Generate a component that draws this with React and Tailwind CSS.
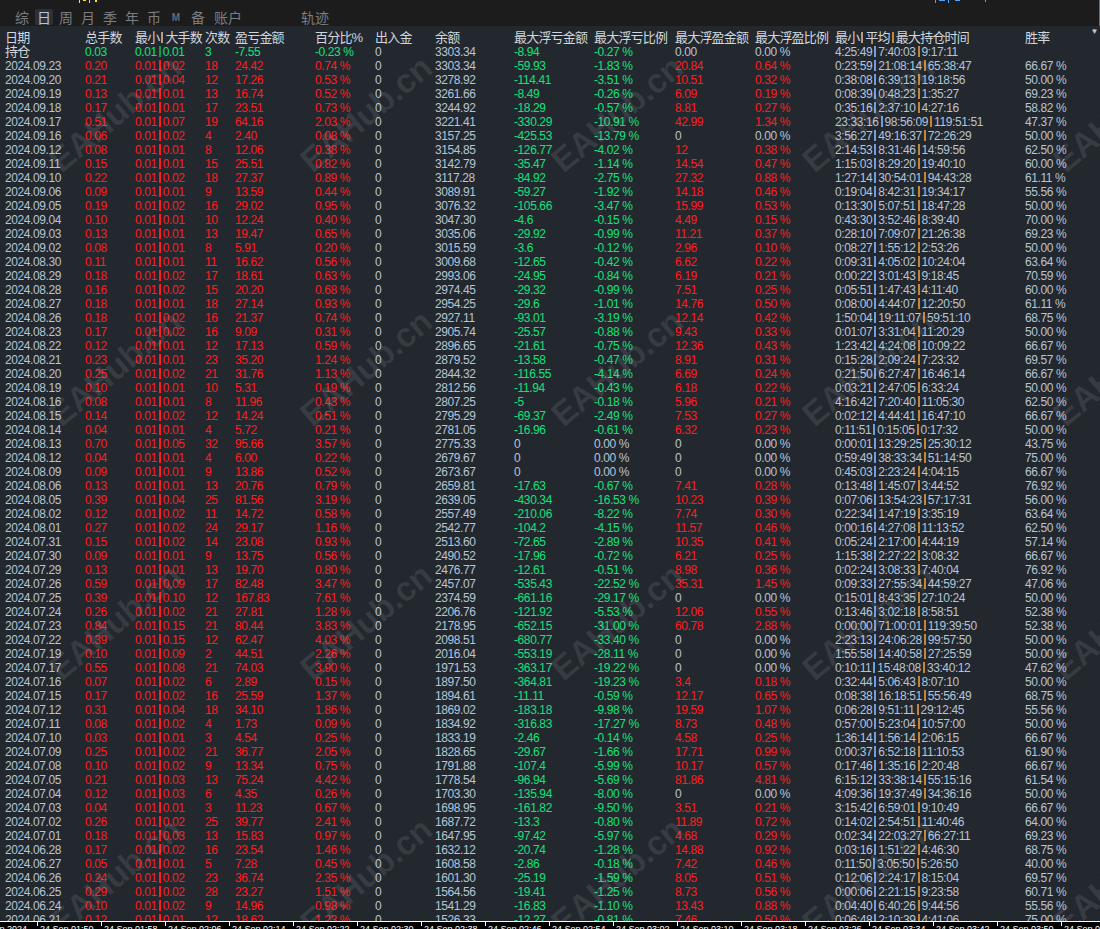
import React from 'react';

// date tot min max cnt pnl pct io bal flAmt flPct fpAmt fpPct t1 t2 t3 win
const RAW = `2024.09.23 0.20 0.01 0.02 18 24.42 0.74 0 3303.34 -59.93 -1.83 20.84 0.64 0:23:59 21:08:14 65:38:47 66.67
2024.09.20 0.21 0.01 0.04 12 17.26 0.53 0 3278.92 -114.41 -3.51 10.51 0.32 0:38:08 6:39:13 19:18:56 50.00
2024.09.19 0.13 0.01 0.01 13 16.74 0.52 0 3261.66 -8.49 -0.26 6.09 0.19 0:08:39 0:48:23 1:35:27 69.23
2024.09.18 0.17 0.01 0.01 17 23.51 0.73 0 3244.92 -18.29 -0.57 8.81 0.27 0:35:16 2:37:10 4:27:16 58.82
2024.09.17 0.51 0.01 0.07 19 64.16 2.03 0 3221.41 -330.29 -10.91 42.99 1.34 23:33:16 98:56:09 119:51:51 47.37
2024.09.16 0.06 0.01 0.02 4 2.40 0.08 0 3157.25 -425.53 -13.79 0 0.00 3:56:27 49:16:37 72:26:29 50.00
2024.09.12 0.08 0.01 0.01 8 12.06 0.38 0 3154.85 -126.77 -4.02 12 0.38 2:14:53 8:31:46 14:59:56 62.50
2024.09.11 0.15 0.01 0.01 15 25.51 0.82 0 3142.79 -35.47 -1.14 14.54 0.47 1:15:03 8:29:20 19:40:10 60.00
2024.09.10 0.22 0.01 0.02 18 27.37 0.89 0 3117.28 -84.92 -2.75 27.32 0.88 1:27:14 30:54:01 94:43:28 61.11
2024.09.06 0.09 0.01 0.01 9 13.59 0.44 0 3089.91 -59.27 -1.92 14.18 0.46 0:19:04 8:42:31 19:34:17 55.56
2024.09.05 0.19 0.01 0.02 16 29.02 0.95 0 3076.32 -105.66 -3.47 15.99 0.53 0:13:30 5:07:51 18:47:28 50.00
2024.09.04 0.10 0.01 0.01 10 12.24 0.40 0 3047.30 -4.6 -0.15 4.49 0.15 0:43:30 3:52:46 8:39:40 70.00
2024.09.03 0.13 0.01 0.01 13 19.47 0.65 0 3035.06 -29.92 -0.99 11.21 0.37 0:28:10 7:09:07 21:26:38 69.23
2024.09.02 0.08 0.01 0.01 8 5.91 0.20 0 3015.59 -3.6 -0.12 2.96 0.10 0:08:27 1:55:12 2:53:26 50.00
2024.08.30 0.11 0.01 0.01 11 16.62 0.56 0 3009.68 -12.65 -0.42 6.62 0.22 0:09:31 4:05:02 10:24:04 63.64
2024.08.29 0.18 0.01 0.02 17 18.61 0.63 0 2993.06 -24.95 -0.84 6.19 0.21 0:00:22 3:01:43 9:18:45 70.59
2024.08.28 0.16 0.01 0.02 15 20.20 0.68 0 2974.45 -29.32 -0.99 7.51 0.25 0:05:51 1:47:43 4:11:40 60.00
2024.08.27 0.18 0.01 0.01 18 27.14 0.93 0 2954.25 -29.6 -1.01 14.76 0.50 0:08:00 4:44:07 12:20:50 61.11
2024.08.26 0.18 0.01 0.02 16 21.37 0.74 0 2927.11 -93.01 -3.19 12.14 0.42 1:50:04 19:11:07 59:51:10 68.75
2024.08.23 0.17 0.01 0.02 16 9.09 0.31 0 2905.74 -25.57 -0.88 9.43 0.33 0:01:07 3:31:04 11:20:29 50.00
2024.08.22 0.12 0.01 0.01 12 17.13 0.59 0 2896.65 -21.61 -0.75 12.36 0.43 1:23:42 4:24:08 10:09:22 66.67
2024.08.21 0.23 0.01 0.01 23 35.20 1.24 0 2879.52 -13.58 -0.47 8.91 0.31 0:15:28 2:09:24 7:23:32 69.57
2024.08.20 0.25 0.01 0.02 21 31.76 1.13 0 2844.32 -116.55 -4.14 6.69 0.24 0:21:50 6:27:47 16:46:14 66.67
2024.08.19 0.10 0.01 0.01 10 5.31 0.19 0 2812.56 -11.94 -0.43 6.18 0.22 0:03:21 2:47:05 6:33:24 50.00
2024.08.16 0.08 0.01 0.01 8 11.96 0.43 0 2807.25 -5 -0.18 5.96 0.21 4:16:42 7:20:40 11:05:30 62.50
2024.08.15 0.14 0.01 0.02 12 14.24 0.51 0 2795.29 -69.37 -2.49 7.53 0.27 0:02:12 4:44:41 16:47:10 66.67
2024.08.14 0.04 0.01 0.01 4 5.72 0.21 0 2781.05 -16.96 -0.61 6.32 0.23 0:11:51 0:15:05 0:17:32 50.00
2024.08.13 0.70 0.01 0.05 32 95.66 3.57 0 2775.33 0 0.00 0 0.00 0:00:01 13:29:25 25:30:12 43.75
2024.08.12 0.04 0.01 0.01 4 6.00 0.22 0 2679.67 0 0.00 0 0.00 0:59:49 38:33:34 51:14:50 75.00
2024.08.09 0.09 0.01 0.01 9 13.86 0.52 0 2673.67 0 0.00 0 0.00 0:45:03 2:23:24 4:04:15 66.67
2024.08.06 0.13 0.01 0.01 13 20.76 0.79 0 2659.81 -17.63 -0.67 7.41 0.28 0:13:48 1:45:07 3:44:52 76.92
2024.08.05 0.39 0.01 0.04 25 81.56 3.19 0 2639.05 -430.34 -16.53 10.23 0.39 0:07:06 13:54:23 57:17:31 56.00
2024.08.02 0.12 0.01 0.02 11 14.72 0.58 0 2557.49 -210.06 -8.22 7.74 0.30 0:22:34 1:47:19 3:35:19 63.64
2024.08.01 0.27 0.01 0.02 24 29.17 1.16 0 2542.77 -104.2 -4.15 11.57 0.46 0:00:16 4:27:08 11:13:52 62.50
2024.07.31 0.15 0.01 0.02 14 23.08 0.93 0 2513.60 -72.65 -2.89 10.35 0.41 0:05:24 2:17:00 4:44:19 57.14
2024.07.30 0.09 0.01 0.01 9 13.75 0.56 0 2490.52 -17.96 -0.72 6.21 0.25 1:15:38 2:27:22 3:08:32 66.67
2024.07.29 0.13 0.01 0.01 13 19.70 0.80 0 2476.77 -12.61 -0.51 8.98 0.36 0:02:24 3:08:33 7:40:04 76.92
2024.07.26 0.59 0.01 0.09 17 82.48 3.47 0 2457.07 -535.43 -22.52 35.31 1.45 0:09:33 27:55:34 44:59:27 47.06
2024.07.25 0.39 0.01 0.10 12 167.83 7.61 0 2374.59 -661.16 -29.17 0 0.00 0:15:01 8:43:35 27:10:24 50.00
2024.07.24 0.26 0.01 0.02 21 27.81 1.28 0 2206.76 -121.92 -5.53 12.06 0.55 0:13:46 3:02:18 8:58:51 52.38
2024.07.23 0.84 0.01 0.15 21 80.44 3.83 0 2178.95 -652.15 -31.00 60.78 2.88 0:00:00 71:00:01 119:39:50 52.38
2024.07.22 0.39 0.01 0.15 12 62.47 4.03 0 2098.51 -680.77 -33.40 0 0.00 2:23:13 24:06:28 99:57:50 50.00
2024.07.19 0.10 0.01 0.09 2 44.51 2.26 0 2016.04 -553.19 -28.11 0 0.00 1:55:58 14:40:58 27:25:59 50.00
2024.07.17 0.55 0.01 0.08 21 74.03 3.90 0 1971.53 -363.17 -19.22 0 0.00 0:10:11 15:48:08 33:40:12 47.62
2024.07.16 0.07 0.01 0.02 6 2.89 0.15 0 1897.50 -364.81 -19.23 3.4 0.18 0:32:44 5:06:43 8:07:10 50.00
2024.07.15 0.17 0.01 0.02 16 25.59 1.37 0 1894.61 -11.11 -0.59 12.17 0.65 0:08:38 16:18:51 55:56:49 68.75
2024.07.12 0.31 0.01 0.04 18 34.10 1.86 0 1869.02 -183.18 -9.98 19.59 1.07 0:06:28 9:51:11 29:12:45 55.56
2024.07.11 0.08 0.01 0.02 4 1.73 0.09 0 1834.92 -316.83 -17.27 8.73 0.48 0:57:00 5:23:04 10:57:00 50.00
2024.07.10 0.03 0.01 0.01 3 4.54 0.25 0 1833.19 -2.46 -0.14 4.58 0.25 1:36:14 1:56:14 2:06:15 66.67
2024.07.09 0.25 0.01 0.02 21 36.77 2.05 0 1828.65 -29.67 -1.66 17.71 0.99 0:00:37 6:52:18 11:10:53 61.90
2024.07.08 0.10 0.01 0.02 9 13.34 0.75 0 1791.88 -107.4 -5.99 10.17 0.57 0:17:46 1:35:16 2:20:48 66.67
2024.07.05 0.21 0.01 0.03 13 75.24 4.42 0 1778.54 -96.94 -5.69 81.86 4.81 6:15:12 33:38:14 55:15:16 61.54
2024.07.04 0.12 0.01 0.03 6 4.35 0.26 0 1703.30 -135.94 -8.00 0 0.00 4:09:36 19:37:49 34:36:16 50.00
2024.07.03 0.04 0.01 0.01 3 11.23 0.67 0 1698.95 -161.82 -9.50 3.51 0.21 3:15:42 6:59:01 9:10:49 66.67
2024.07.02 0.26 0.01 0.02 25 39.77 2.41 0 1687.72 -13.3 -0.80 11.89 0.72 0:14:02 2:54:51 11:40:46 64.00
2024.07.01 0.18 0.01 0.03 13 15.83 0.97 0 1647.95 -97.42 -5.97 4.68 0.29 0:02:34 22:03:27 66:27:11 69.23
2024.06.28 0.17 0.01 0.02 16 23.54 1.46 0 1632.12 -20.74 -1.28 14.88 0.92 0:03:16 1:51:22 4:46:30 68.75
2024.06.27 0.05 0.01 0.01 5 7.28 0.45 0 1608.58 -2.86 -0.18 7.42 0.46 0:11:50 3:05:50 5:26:50 40.00
2024.06.26 0.24 0.01 0.02 23 36.74 2.35 0 1601.30 -25.19 -1.59 8.05 0.51 0:12:06 2:24:17 8:15:04 69.57
2024.06.25 0.29 0.01 0.02 28 23.27 1.51 0 1564.56 -19.41 -1.25 8.73 0.56 0:00:06 2:21:15 9:23:58 60.71
2024.06.24 0.10 0.01 0.02 9 14.96 0.98 0 1541.29 -16.83 -1.10 13.43 0.88 0:04:40 6:40:26 9:44:56 55.56
2024.06.21 0.12 0.01 0.01 12 18.62 1.23 0 1526.33 -12.27 -0.81 7.46 0.50 0:06:48 2:10:39 4:41:06 75.00`;

const rows = RAW.split('\n').map((l) => l.trim().split(' '));

const LIGHT = 'text-[#b7c4d7]';
const RED = 'text-[#ff1d1d]';
const GREEN = 'text-[#16e07a]';
const HEAD = 'text-[#d2d7de]';

const GRID = 'grid grid-cols-[80px_50px_70px_30px_80px_60px_60px_79px_80px_81px_80px_80px_190px_1fr] h-[14px] leading-[14px] whitespace-nowrap';

const TABS = ['综', '日', '周', '月', '季', '年', '币'];

const TIMES = ['01:50', '01:58', '02:06', '02:14', '02:22', '02:30', '02:38', '02:46', '02:54', '03:02', '03:10', '03:18', '03:26', '03:34', '03:42', '03:50', '03:58'];

function Bar({ color }) {
  return <span className={`inline-block w-[2px] h-[11px] mx-[2px] align-[-1px] ${color}`} />;
}

function Pair({ a, b, color, bar }) {
  return (
    <span className={color}>
      {a}
      <Bar color={bar} />
      {b}
    </span>
  );
}

function Times({ t1, t2, t3 }) {
  return (
    <span className={LIGHT}>
      {t1}
      <Bar color="bg-[#6f9fdc]" />
      {t2}
      <Bar color="bg-[#c2853c]" />
      {t3}
    </span>
  );
}

function DataRow({ r }) {
  const [date, tot, mn, mx, cnt, pnl, pct, io, bal, flA, flP, fpA, fpP, t1, t2, t3, win] = r;
  const flColor = flA === '0' ? LIGHT : GREEN;
  const flPColor = flP === '0.00' ? LIGHT : GREEN;
  const fpColor = fpA === '0' ? LIGHT : RED;
  const fpPColor = fpP === '0.00' ? LIGHT : RED;
  return (
    <div className={GRID}>
      <span className={LIGHT}>{date}</span>
      <span className={RED}>{tot}</span>
      <Pair a={mn} b={mx} color={RED} bar="bg-[#ff1d1d]" />
      <span className={RED}>{cnt}</span>
      <span className={RED}>{pnl}</span>
      <span className={RED}>{pct} %</span>
      <span className={LIGHT}>{io}</span>
      <span className={LIGHT}>{bal}</span>
      <span className={flColor}>{flA}</span>
      <span className={flPColor}>{flP} %</span>
      <span className={fpColor}>{fpA}</span>
      <span className={fpPColor}>{fpP} %</span>
      <Times t1={t1} t2={t2} t3={t3} />
      <span className={LIGHT}>{win} %</span>
    </div>
  );
}

function Watermarks() {
  const marks = [];
  for (let j = 0; j < 4; j++) {
    for (let i = 0; i < 5; i++) {
      marks.push({ x: 115 + 251 * i, y: 88 + 254 * j });
    }
  }
  return (
    <div className="pointer-events-none absolute inset-0">
      {marks.map((m, k) => (
        <span
          key={k}
          className="absolute -translate-x-1/2 -translate-y-1/2 -rotate-[40deg] text-[34px] font-bold text-white/[0.09] whitespace-nowrap"
          style={{ left: m.x, top: m.y }}
        >
          EAHub.cn
        </span>
      ))}
    </div>
  );
}

export default function App() {
  return (
    <div className="w-[1100px] h-[929px] overflow-hidden bg-[#23282f] font-['Liberation_Sans','Noto_Sans_CJK_SC',sans-serif] text-[12px] tracking-[-0.4px] flex flex-col">
      {/* top bar */}
      <div className="h-[26px] shrink-0 bg-[#1c1c1d] border-r border-[#6b6e73] flex flex-col">
        <div className="h-[3px] flex items-start overflow-hidden">
          <span className="ml-[79px] w-[1px] h-[3px] bg-[#ffe600]" />
          <span className="ml-[3px] w-[3px] h-[1px] bg-[#ffe600]" />
          <span className="ml-[3px] w-[1px] h-[3px] bg-[#ffe600]" />
          <span className="ml-[5px] w-[2px] h-[2px] bg-[#ffe600]" />
          <span className="ml-[838px] w-[1px] h-[3px] bg-[#4ea5ff]" />
          <span className="ml-[3px] w-[6px] h-[1px] bg-[#4ea5ff]" />
          <span className="ml-[3px] w-[1px] h-[3px] bg-[#4ea5ff]" />
          <span className="ml-[6px] w-[5px] h-[1px] bg-[#4ea5ff]" />
          <span className="ml-[25px] w-[1px] h-[2px] bg-[#4ea5ff]" />
        </div>
        <div className="flex items-center h-[16px] mt-[6px] pl-[11px] text-[14px] tracking-normal text-[#7b7d81] font-['Noto_Sans_CJK_SC',sans-serif]">
          {TABS.map((t) => (
            <div key={t} className="w-[22px] flex justify-center">
              {t === '日' ? (
                <span className="w-[18px] h-[16px] flex items-center justify-center bg-[#2b313a] rounded-[2px] text-[#b2c7e6]">{t}</span>
              ) : (
                <span>{t}</span>
              )}
            </div>
          ))}
          <div className="w-[22px] flex justify-center">
            <span className="text-[10px] font-bold text-[#5d6b80] font-['Liberation_Sans',sans-serif]">M</span>
          </div>
          <div className="w-[22px] flex justify-center">备</div>
          <div className="w-[38px] flex justify-center">账户</div>
          <div className="w-[38px] ml-[49px] flex justify-center">轨迹</div>
        </div>
      </div>

      {/* table */}
      <div className="relative h-[895px] shrink-0 overflow-hidden pt-[5px] pl-[5px]">
        <div className={`${GRID} text-[13px] tracking-[-0.8px] ${HEAD}`}>
          <span>日期</span>
          <span>总手数</span>
          <span>最小<Bar color="bg-[#b89b86]" />大手数</span>
          <span>次数</span>
          <span>盈亏金额</span>
          <span>百分比%</span>
          <span>出入金</span>
          <span>余额</span>
          <span>最大浮亏金额</span>
          <span>最大浮亏比例</span>
          <span>最大浮盈金额</span>
          <span>最大浮盈比例</span>
          <span>最小<Bar color="bg-[#b89b86]" />平均<Bar color="bg-[#c2853c]" />最大持仓时间</span>
          <span>胜率</span>
        </div>
        <div className={GRID}>
          <span className={`${HEAD} text-[13px] tracking-[-0.8px]`}>持仓</span>
          <span className={GREEN}>0.03</span>
          <Pair a="0.01" b="0.01" color={GREEN} bar="bg-[#17984e]" />
          <span className={GREEN}>3</span>
          <span className={GREEN}>-7.55</span>
          <span className={GREEN}>-0.23 %</span>
          <span className={LIGHT}>0</span>
          <span className={LIGHT}>3303.34</span>
          <span className={GREEN}>-8.94</span>
          <span className={GREEN}>-0.27 %</span>
          <span className={LIGHT}>0.00</span>
          <span className={LIGHT}>0.00 %</span>
          <Times t1="4:25:49" t2="7:40:03" t3="9:17:11" />
          <span />
        </div>
        {rows.map((r) => (
          <DataRow key={r[0]} r={r} />
        ))}
        <Watermarks />
        <span className="absolute right-[2px] top-[2px] text-[8px] leading-none text-[#c9cbce]">▼</span>
      </div>

      {/* time axis */}
      <div className="h-[8px] shrink-0 bg-black border-t border-white flex overflow-hidden">
        <div className="flex -ml-[27px] text-[9px] leading-none text-white tracking-normal">
          <div className="w-[64px] shrink-0 relative">
            <span className="absolute left-0 top-0 w-px h-[4px] bg-white" />
            <span className="absolute left-[3px] top-[3px] whitespace-nowrap">24 Sep 2024</span>
          </div>
          {TIMES.map((t) => (
            <div key={t} className="w-[64px] shrink-0 relative">
              <span className="absolute left-0 top-0 w-px h-[4px] bg-white" />
              <span className="absolute left-[3px] top-[3px] whitespace-nowrap">24 Sep {t}</span>
            </div>
          ))}
        </div>
      </div>
    </div>
  );
}
